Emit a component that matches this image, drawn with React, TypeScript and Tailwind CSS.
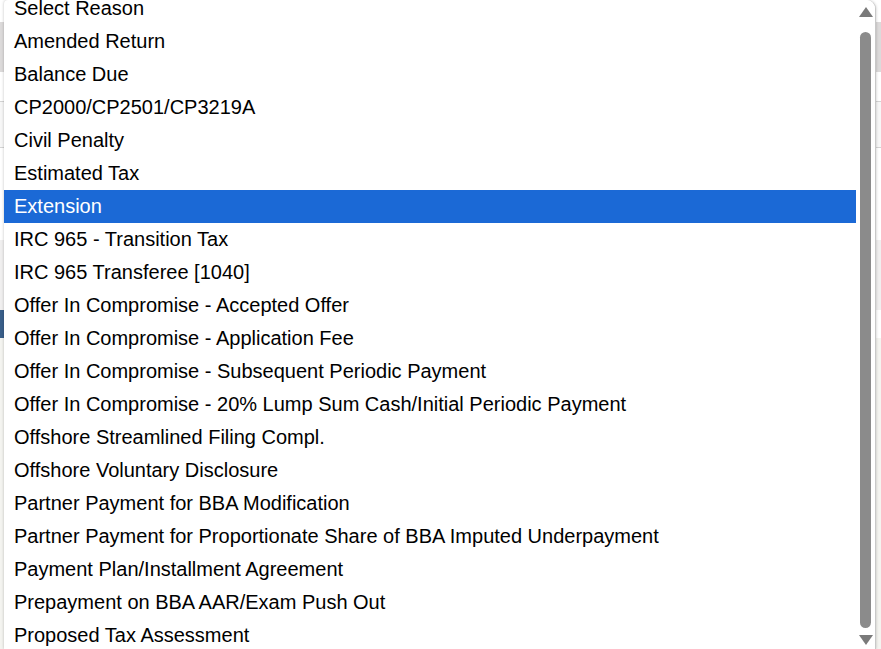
import React from 'react';

const reasons = [
  'Select Reason',
  'Amended Return',
  'Balance Due',
  'CP2000/CP2501/CP3219A',
  'Civil Penalty',
  'Estimated Tax',
  'Extension',
  'IRC 965 - Transition Tax',
  'IRC 965 Transferee [1040]',
  'Offer In Compromise - Accepted Offer',
  'Offer In Compromise - Application Fee',
  'Offer In Compromise - Subsequent Periodic Payment',
  'Offer In Compromise - 20% Lump Sum Cash/Initial Periodic Payment',
  'Offshore Streamlined Filing Compl.',
  'Offshore Voluntary Disclosure',
  'Partner Payment for BBA Modification',
  'Partner Payment for Proportionate Share of BBA Imputed Underpayment',
  'Payment Plan/Installment Agreement',
  'Prepayment on BBA AAR/Exam Push Out',
  'Proposed Tax Assessment',
];

const selected = 'Extension';

export default function App() {
  return (
    <div className="relative w-[881px] h-[649px] overflow-hidden bg-white font-['Liberation_Sans',Arial,sans-serif]">
      {/* page behind the popup, only its edges show */}
      <div className="flex flex-col h-full">
        <div className="h-[22px] bg-white" />
        <div className="h-[50px] bg-[#dcdada]" />
        <div className="h-[30px] bg-white border-b border-[#d4d4d4]" />
        <div className="h-[46px] bg-[#f7f7f7] border-b border-[#d4d4d4]" />
        <div className="h-[92px] bg-white" />
        <div className="h-[70px] bg-[#f0efef]" />
        <div className="h-[28px] w-[20px] bg-[#3a5f8a]" />
        <div className="flex-1 bg-[#f4f4f0]" />
      </div>

      <div className="absolute left-[4px] top-0 w-[872px] h-[649px] bg-white border-r border-[#c8c8c8] rounded-tl-[4px] rounded-tr-[9px] shadow-[0_0_3px_rgba(0,0,0,0.25)] flex overflow-hidden">
        <ul className="flex-1 -mt-[8px] text-[20px] leading-[33px] text-black">
          {reasons.map((r) => (
            <li
              key={r}
              className={
                r === selected
                  ? 'h-[33px] pl-[10px] bg-[#1b69d6] text-white whitespace-nowrap'
                  : 'h-[33px] pl-[10px] whitespace-nowrap'
              }
            >
              {r}
            </li>
          ))}
        </ul>
        <div className="w-[19px] flex flex-col items-center pt-[7px] pb-[2px] bg-white">
          <svg viewBox="0 0 14 10" className="w-[14px] h-[10px] shrink-0 block">
            <path d="M7 0 L14 10 L0 10 Z" fill="#7a7a7a" />
          </svg>
          <div className="mt-[15px] w-[11px] h-[596px] shrink-0 rounded-full bg-[#8b8b8b]" />
          <svg viewBox="0 0 14 10" className="mt-[7px] w-[14px] h-[10px] shrink-0 block">
            <path d="M0 0 L14 0 L7 10 Z" fill="#7a7a7a" />
          </svg>
        </div>
      </div>
    </div>
  );
}
